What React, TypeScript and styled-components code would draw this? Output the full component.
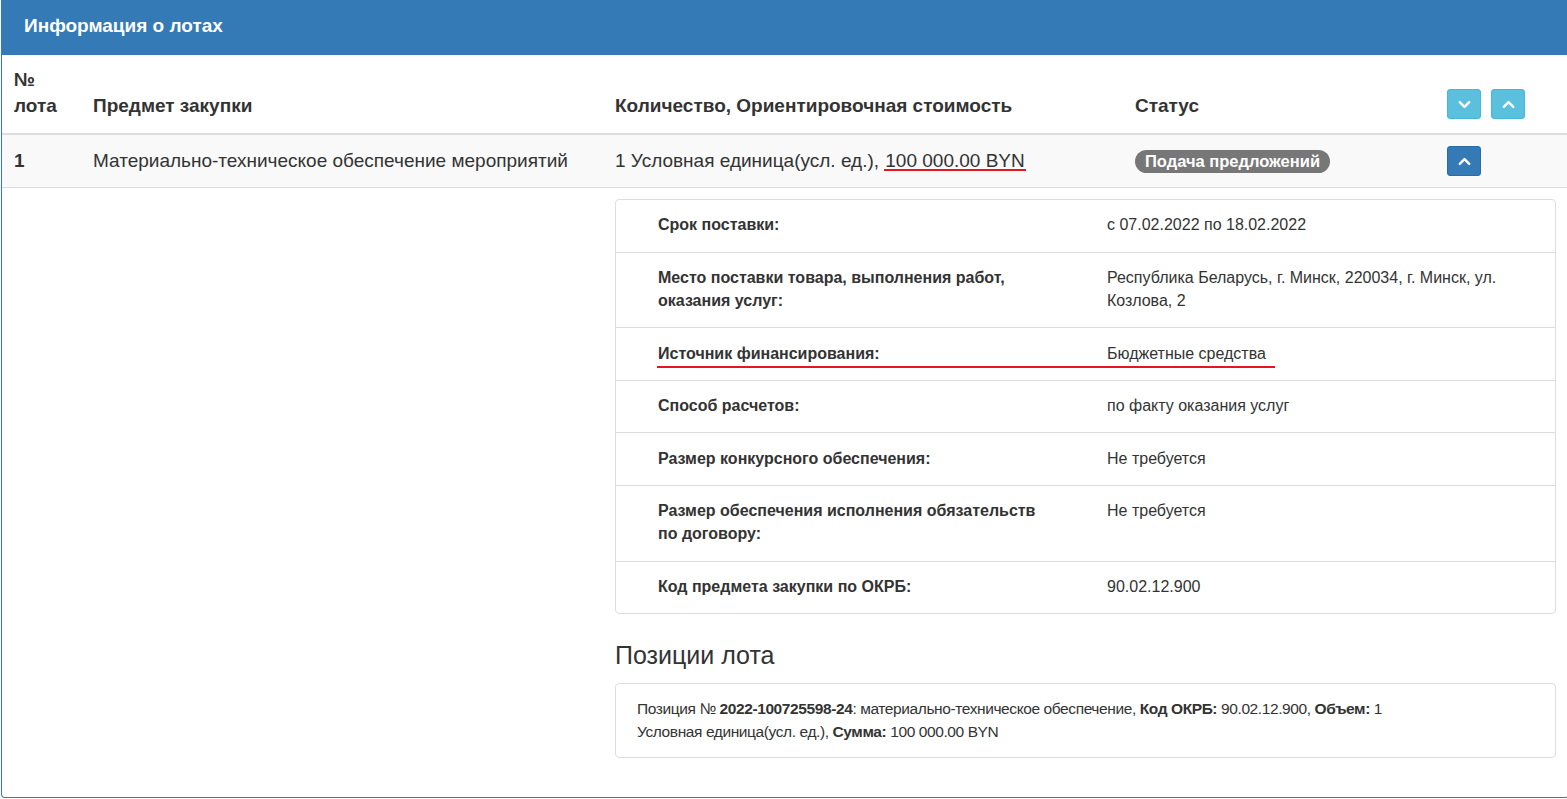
import { createGlobalStyle } from "styled-components";
import styled from "styled-components";
import { ChevronDown, ChevronUp } from "lucide-react";

const GlobalStyle = createGlobalStyle`
  html, body {
    margin: 0;
    padding: 0;
    background: #fff;
    overflow: hidden;
  }
  body {
    font-family: "Liberation Sans", Arial, Helvetica, sans-serif;
    color: #333;
  }
`;

const Panel = styled.div`
  box-sizing: border-box;
  margin-left: 1px;
  width: 1568px;
  height: 798px;
  border: 1px solid #337ab7;
  border-top: none;
  border-radius: 0 0 4px 4px;
  background: #fff;
`;

const PanelHeading = styled.div`
  box-sizing: border-box;
  background: #337ab7;
  color: #fff;
  height: 55px;
  padding: 0 22px 4px;
  display: flex;
  align-items: center;
  font-size: 19px;
  font-weight: bold;
`;

const Table = styled.table`
  width: 100%;
  border-collapse: collapse;
  table-layout: fixed;
  font-size: 19px;
  line-height: 26px;
`;

const Th = styled.th`
  text-align: left;
  vertical-align: bottom;
  padding: 12px 12px 14px;
  font-weight: bold;
  border-bottom: 2px solid #ddd;
`;

const Td = styled.td`
  padding: 11px 12px;
  vertical-align: middle;
  border-bottom: 1px solid #ddd;
`;

const StripedRow = styled.tr`
  background: #f9f9f9;
`;

const DetailCell = styled.td`
  padding: 11px 12px 38px;
  vertical-align: top;
`;

const Price = styled.span`
  display: inline-block;
  line-height: 17px;
  border-bottom: 2px solid #e8141f;
  padding: 0 1px;
`;

const Badge = styled.span`
  display: inline-block;
  background: #777;
  color: #fff;
  font-size: 16.5px;
  font-weight: bold;
  line-height: 23px;
  padding: 0 10px;
  border-radius: 12px;
`;

const ButtonGroup = styled.div`
  display: flex;
  gap: 10px;
`;

const IconButton = styled.button<{ $variant: "info" | "primary" }>`
  width: 34px;
  height: 30px;
  padding: 0;
  border-radius: 3px;
  border: 1px solid ${(p) => (p.$variant === "info" ? "#46b8da" : "#2e6da4")};
  background: ${(p) => (p.$variant === "info" ? "#5bc0de" : "#337ab7")};
  color: #fff;
  display: flex;
  align-items: center;
  justify-content: center;
  cursor: pointer;
`;

const InfoCard = styled.div`
  border: 1px solid #ddd;
  border-radius: 4px;
  font-size: 16px;
  line-height: 22.86px;
`;

const InfoRow = styled.div`
  position: relative;
  display: grid;
  grid-template-columns: 491px 1fr;
  border-top: 1px solid #ddd;
  &:first-child {
    border-top: none;
  }
`;

const InfoLabel = styled.div`
  padding: 14.4px 64px 14.4px 42px;
  font-weight: bold;
`;

const InfoValue = styled.div`
  padding: 14.4px 40px 14.4px 0;
`;

const RedMark = styled.div`
  position: absolute;
  left: 41px;
  top: 38px;
  width: 618px;
  height: 2px;
  background: #e8141f;
`;

const SectionTitle = styled.h3`
  margin: 28px 0 15px;
  font-size: 25px;
  font-weight: normal;
  line-height: 26px;
  color: #333;
`;

const PositionBox = styled.div`
  border: 1px solid #ddd;
  border-radius: 4px;
  padding: 13px 120px 14px 21px;
  font-size: 15.5px;
  letter-spacing: -0.4px;
  line-height: 23px;
`;

const details: { label: string; value: string; mark?: boolean }[] = [
  { label: "Срок поставки:", value: "с 07.02.2022 по 18.02.2022" },
  {
    label: "Место поставки товара, выполнения работ, оказания услуг:",
    value: "Республика Беларусь, г. Минск, 220034, г. Минск, ул. Козлова, 2",
  },
  { label: "Источник финансирования:", value: "Бюджетные средства", mark: true },
  { label: "Способ расчетов:", value: "по факту оказания услуг" },
  { label: "Размер конкурсного обеспечения:", value: "Не требуется" },
  {
    label: "Размер обеспечения исполнения обязательств по договору:",
    value: "Не требуется",
  },
  { label: "Код предмета закупки по ОКРБ:", value: "90.02.12.900" },
];

export default function App() {
  return (
    <>
      <GlobalStyle />
      <Panel>
        <PanelHeading>Информация о лотах</PanelHeading>
        <Table>
          <colgroup>
            <col style={{ width: 79 }} />
            <col style={{ width: 522 }} />
            <col style={{ width: 520 }} />
            <col style={{ width: 312 }} />
            <col />
          </colgroup>
          <thead>
            <tr>
              <Th>№ лота</Th>
              <Th>Предмет закупки</Th>
              <Th>Количество, Ориентировочная стоимость</Th>
              <Th>Статус</Th>
              <Th>
                <ButtonGroup>
                  <IconButton $variant="info">
                    <ChevronDown size={19} strokeWidth={3} />
                  </IconButton>
                  <IconButton $variant="info">
                    <ChevronUp size={19} strokeWidth={3} />
                  </IconButton>
                </ButtonGroup>
              </Th>
            </tr>
          </thead>
          <tbody>
            <StripedRow>
              <Td>
                <b>1</b>
              </Td>
              <Td>Материально-техническое обеспечение мероприятий</Td>
              <Td>
                1 Условная единица(усл. ед.), <Price>100 000.00 BYN</Price>
              </Td>
              <Td>
                <Badge>Подача предложений</Badge>
              </Td>
              <Td>
                <IconButton $variant="primary">
                  <ChevronUp size={19} strokeWidth={3} />
                </IconButton>
              </Td>
            </StripedRow>
            <tr>
              <td />
              <td />
              <DetailCell colSpan={3}>
                <InfoCard>
                  {details.map((d) => (
                    <InfoRow key={d.label}>
                      <InfoLabel>{d.label}</InfoLabel>
                      <InfoValue>{d.value}</InfoValue>
                      {d.mark && <RedMark />}
                    </InfoRow>
                  ))}
                </InfoCard>
                <SectionTitle>Позиции лота</SectionTitle>
                <PositionBox>
                  Позиция № <b>2022-100725598-24</b>: материально-техническое
                  обеспечение, <b>Код ОКРБ:</b> 90.02.12.900, <b>Объем:</b> 1
                  Условная единица(усл. ед.), <b>Сумма:</b> 100 000.00 BYN
                </PositionBox>
              </DetailCell>
            </tr>
          </tbody>
        </Table>
      </Panel>
    </>
  );
}
